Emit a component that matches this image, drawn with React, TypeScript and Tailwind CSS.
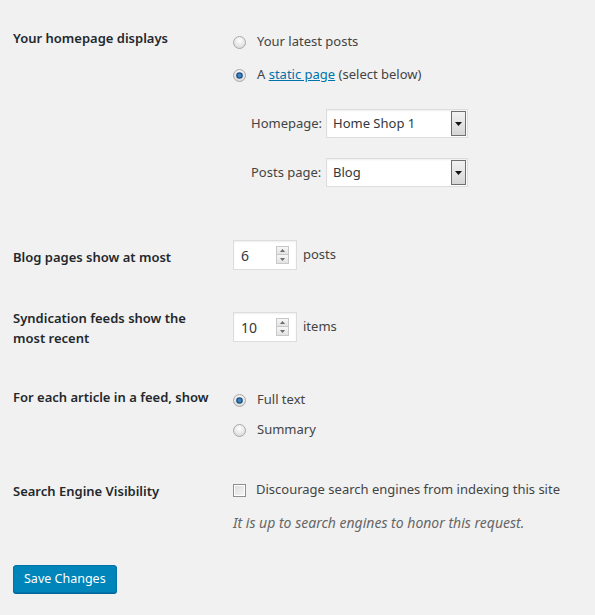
import React from "react";

const font = { fontFamily: '"Noto Sans", "Open Sans", sans-serif' };

function Radio({ checked }: { checked?: boolean }) {
  return (
    <svg width="13" height="13" viewBox="0 0 13 13" className="shrink-0">
      <defs>
        <radialGradient id={checked ? "rgc" : "rgu"} cx="50%" cy="35%" r="60%">
          <stop offset="0%" stopColor="#ffffff" />
          <stop offset="100%" stopColor="#dcdcdc" />
        </radialGradient>
      </defs>
      <circle cx="6.5" cy="6.5" r="6" fill={`url(#${checked ? "rgc" : "rgu"})`} stroke="#a9a9a9" strokeWidth="1" />
      {checked && <circle cx="6.5" cy="6.5" r="3.3" fill="#1f4e79" />}
      {checked && <circle cx="6.5" cy="6.5" r="2" fill="#3a86c8" />}
    </svg>
  );
}

function SelectBox({ value }: { value: string }) {
  return (
    <div className="flex h-[29px] w-[142px] items-center border border-[#ddd] bg-white pl-[6px] text-[13px] text-[#32373c] shadow-[inset_0_1px_2px_rgba(0,0,0,0.07)]">
      <span className="flex-1 whitespace-nowrap">{value}</span>
      <div className="mr-[1px] flex h-[25px] w-[15px] items-center justify-center border border-[#707070] bg-gradient-to-b from-[#f2f2f2] to-[#d6d6d6]">
        <svg width="7" height="4" viewBox="0 0 7 4">
          <path d="M0 0 L7 0 L3.5 4 Z" fill="#111" />
        </svg>
      </div>
    </div>
  );
}

function NumberBox({ value }: { value: string }) {
  return (
    <div className="flex h-[30px] w-[64px] items-center border border-[#ddd] bg-white pl-[7px] text-[14px] text-[#32373c] shadow-[inset_0_1px_2px_rgba(0,0,0,0.07)]">
      <span className="flex-1">{value}</span>
      <div className="mr-[7px] flex w-[13px] flex-col border border-[#c8c8c8]">
        <div className="flex h-[8px] items-center justify-center border-b border-[#c8c8c8] bg-gradient-to-b from-[#f6f6f6] to-[#e2e2e2]">
          <svg width="5" height="3" viewBox="0 0 5 3"><path d="M0 3 L5 3 L2.5 0 Z" fill="#6b6b6b" /></svg>
        </div>
        <div className="flex h-[8px] items-center justify-center bg-gradient-to-b from-[#f6f6f6] to-[#e2e2e2]">
          <svg width="5" height="3" viewBox="0 0 5 3"><path d="M0 0 L5 0 L2.5 3 Z" fill="#6b6b6b" /></svg>
        </div>
      </div>
    </div>
  );
}

function Checkbox() {
  return (
    <div className="flex h-[13px] w-[13px] shrink-0 items-center justify-center border border-[#8f8f8f] bg-white">
      <div className="h-[9px] w-[9px] bg-gradient-to-br from-[#dedede] to-[#f4f4f4]" />
    </div>
  );
}

const label = "w-[220px] shrink-0 text-[13px] font-semibold leading-[18px] text-[#23282d]";

export default function App() {
  return (
    <div className="min-h-[615px] w-[595px] bg-[#f1f1f1] px-[13px] text-[13px] text-[#444]" style={font}>
      {/* Row 1 */}
      <div className="flex h-[230px]">
        <div className={`${label} mt-[29px]`}>Your homepage displays</div>
        <div className="flex flex-col">
          <div className="mt-[33px] flex h-[18px] items-center gap-[11px] whitespace-nowrap">
            <Radio />
            <span>Your latest posts</span>
          </div>
          <div className="mt-[15px] flex h-[18px] items-center gap-[11px] whitespace-nowrap">
            <Radio checked />
            <span>
              A <span className="text-[#0073aa] underline">static page</span> (select below)
            </span>
          </div>
          <div className="ml-[18px] mt-[25px] flex items-center">
            <span className="w-[75px] whitespace-nowrap">Homepage:</span>
            <SelectBox value="Home Shop 1" />
          </div>
          <div className="ml-[18px] mt-[20px] flex items-center">
            <span className="w-[75px] whitespace-nowrap">Posts page:</span>
            <SelectBox value="Blog" />
          </div>
        </div>
      </div>
      {/* Row 2 */}
      <div className="flex h-[70px]">
        <div className={`${label} mt-[18px]`}>Blog pages show at most</div>
        <div className="mt-[10px] flex items-center gap-[6px] self-start">
          <NumberBox value="6" />
          <span>posts</span>
        </div>
      </div>
      {/* Row 3 */}
      <div className="flex h-[70px]">
        <div className={`${label} mt-[8px] pr-[30px] leading-[20px]`}>Syndication feeds show the most recent</div>
        <div className="mt-[12px] flex items-center gap-[6px] self-start">
          <NumberBox value="10" />
          <span>items</span>
        </div>
      </div>
      {/* Row 4 */}
      <div className="flex h-[90px]">
        <div className={`${label} mt-[18px]`}>For each article in a feed, show</div>
        <div className="flex flex-col">
          <div className="mt-[21px] flex h-[18px] items-center gap-[11px]">
            <Radio checked />
            <span>Full text</span>
          </div>
          <div className="mt-[12px] flex h-[18px] items-center gap-[11px]">
            <Radio />
            <span>Summary</span>
          </div>
        </div>
      </div>
      {/* Row 5 */}
      <div className="flex h-[85px]">
        <div className={`${label} mt-[22px]`}>Search Engine Visibility</div>
        <div className="flex flex-col">
          <div className="mt-[21px] flex h-[18px] items-center gap-[10px] whitespace-nowrap">
            <Checkbox />
            <span>Discourage search engines from indexing this site</span>
          </div>
          <div className="mt-[13px] h-[18px] whitespace-nowrap text-[14px] italic text-[#666]">It is up to search engines to honor this request.</div>
        </div>
      </div>
      <div className="pt-[20px]">
        <button className="h-[28px] rounded-[3px] border border-[#0073aa] bg-[#0085ba] px-[10px] text-[12.5px] text-white shadow-[0_1px_0_#006799]">
          Save Changes
        </button>
      </div>
    </div>
  );
}
